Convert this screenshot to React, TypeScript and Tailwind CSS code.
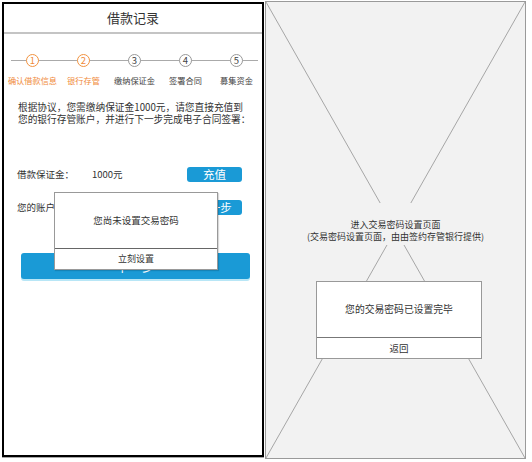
const steps = [
  { n: '1', label: '确认借款信息', active: true },
  { n: '2', label: '银行存管', active: true },
  { n: '3', label: '缴纳保证金', active: false },
  { n: '4', label: '签署合同', active: false },
  { n: '5', label: '募集资金', active: false },
];

const font = { fontFamily: '"Noto Sans CJK SC", "Noto Sans", sans-serif' };

export default function App() {
  return (
    <div className="flex h-[462px] w-[532px] items-start bg-white pt-[1px] text-[#333]" style={font}>
      {/* Left: deposit page with dialog */}
      <div className="relative ml-[2px] mt-[1px] flex h-[455px] w-[262px] flex-col border-2 border-black shadow-[0_1px_0_#a8a8a8]">
        <div className="flex h-[28px] items-center justify-center text-[13px] text-[#333]">借款记录</div>
        <div className="h-[2px] bg-[#c4c4c4]" />

        {/* Steps */}
        <div className="relative mt-[20px] flex pl-[3px]">
          <div className="absolute left-[7px] right-[4px] top-[6px] h-px bg-[#aaa]" />
          {steps.map((s) => (
            <div key={s.n} className="relative flex w-[52px] flex-col items-center">
              <div
                className={`flex h-[13px] w-[13px] items-center justify-center rounded-full border bg-white text-[9.5px] leading-none ${
                  s.active ? 'border-[#f29340] text-[#f08a3a]' : 'border-[#999] text-[#444]'
                }`}
              >
                {s.n}
              </div>
              <div
                className={`mt-[8px] whitespace-nowrap text-[8.2px] leading-[10px] ${
                  s.active ? 'text-[#f08a3a]' : 'text-[#444]'
                }`}
              >
                {s.label}
              </div>
            </div>
          ))}
        </div>

        <p className="mt-[16px] pl-[14px] pr-[10px] text-[9.7px] leading-[12px] text-[#333]">
          根据协议，您需缴纳保证金1000元，请您直接充值到
          <br />
          您的银行存管账户，并进行下一步完成电子合同签署：
        </p>

        <div className="mt-[42px] flex items-center pl-[13px] pr-[20px] text-[9.5px]">
          <span className="w-[75px]">借款保证金：</span>
          <span>1000元</span>
          <button className="ml-auto flex h-[15px] w-[55px] items-center justify-center rounded-[3px] bg-[#1a9ad6] text-[11.5px] text-white">
            充值
          </button>
        </div>

        <div className="mt-[18px] flex items-center pl-[13px] pr-[20px] text-[9.5px]">
          <span>您的账户余额：</span>
          <span className="ml-[20px]">0元</span>
          <button className="ml-auto flex h-[15px] w-[55px] items-center justify-center rounded-[3px] bg-[#1a9ad6] text-[11.5px] text-white">
            下一步
          </button>
        </div>

        <button className="ml-[17px] mr-[12px] mt-[38px] flex h-[26px] items-center justify-center rounded-[3px] bg-[#1a9ad6] text-[13px] text-white shadow-[0_2px_0_#b8e6f6]">
          下一步
        </button>

        {/* Dialog */}
        <div className="absolute left-[50px] top-[188px] flex w-[164px] flex-col border border-[#999] bg-white shadow-[1px_1px_1px_rgba(0,0,0,0.15)]">
          <div className="flex h-[55px] items-center justify-center text-[9.5px] text-[#333]">您尚未设置交易密码</div>
          <div className="h-px bg-[#666]" />
          <div className="flex h-[20px] items-center justify-center text-[9px] text-[#333]">立刻设置</div>
        </div>
      </div>

      {/* Right: placeholder page */}
      <div className="relative ml-px h-[458px] w-[261px] border border-[#9a9a9a] bg-[#f2f2f2]">
        <svg className="absolute inset-0 h-full w-full" viewBox="0 0 100 100" preserveAspectRatio="none">
          <line x1="0" y1="0" x2="100" y2="100" stroke="#a6a6a6" strokeWidth="1" vectorEffect="non-scaling-stroke" />
          <line x1="100" y1="0" x2="0" y2="100" stroke="#a6a6a6" strokeWidth="1" vectorEffect="non-scaling-stroke" />
        </svg>
        <div className="relative flex flex-col">
          <div className="mx-auto mt-[201px] flex h-[42px] flex-col items-center bg-[#f2f2f2] px-[2px] pt-[16px] text-[9px] leading-[11.5px] text-[#333]">
            <span>进入交易密码设置页面</span>
            <span>(交易密码设置页面，由由签约存管银行提供)</span>
          </div>
          <div className="ml-[50px] mt-[36px] flex w-[166px] flex-col border border-[#999] bg-white">
            <div className="flex h-[55px] items-center justify-center text-[9.8px] text-[#333]">您的交易密码已设置完毕</div>
            <div className="h-px bg-[#777]" />
            <div className="flex h-[20px] items-center justify-center text-[9.5px] text-[#333]">返回</div>
          </div>
        </div>
      </div>
    </div>
  );
}
